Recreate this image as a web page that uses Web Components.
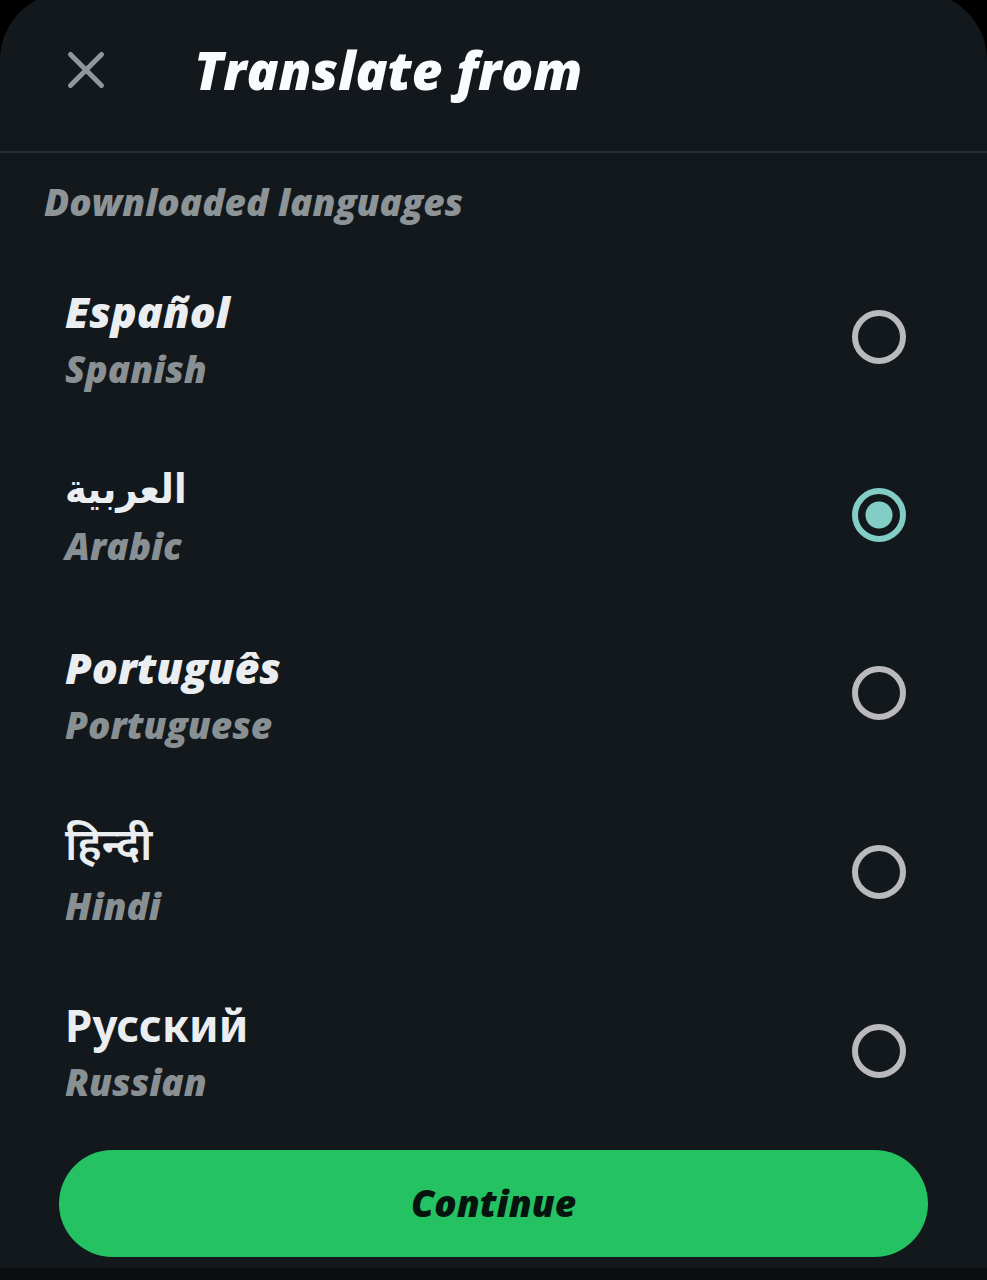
<!DOCTYPE html>
<html lang="en">
<head>
<meta charset="utf-8">
<meta name="viewport" content="width=device-width, initial-scale=1">
<title>Translate from</title>
<style>
  html, body { margin: 0; background: #000; }
  body { min-height: 100vh; overflow-x: hidden; font-family: "Open Sans", "Noto Sans", "Liberation Sans", sans-serif; }
</style>
</head>
<body>
<translate-sheet>
  <sheet-header slot="header">Translate from</sheet-header>
  <language-list label="Downloaded languages">
    <language-option code="es" name="Spanish">Español</language-option>
    <language-option code="ar" name="Arabic" script="arabic" checked>العربية</language-option>
    <language-option code="pt" name="Portuguese">Português</language-option>
    <language-option code="hi" name="Hindi" script="tall">हिन्दी</language-option>
    <language-option code="ru" name="Russian" script="plain">Русский</language-option>
  </language-list>
  <primary-button slot="footer">Continue</primary-button>
</translate-sheet>

<script>
class Base extends HTMLElement {
  connectedCallback() {
    if (!this.shadowRoot) this.attachShadow({ mode: "open" }).innerHTML = this.render();
  }
}

customElements.define("translate-sheet", class extends Base {
  render() {
    return `
    <style>
      :host { display: flex; flex-direction: column; min-height: 100vh; overflow: hidden; background: #000; }
      main { flex: 1; display: flex; flex-direction: column; margin-top: -8px; background: #13181c; border-radius: 68px 68px 0 0; }
      .content { flex: 1; }
      footer { padding: 10px 59px 11px; }
      .nav { height: 12px; background: #0a0e11; }
    </style>
    <main>
      <slot name="header"></slot>
      <div class="content"><slot></slot></div>
      <footer><slot name="footer"></slot></footer>
      <div class="nav"></div>
    </main>`;
  }
});

customElements.define("sheet-header", class extends Base {
  render() {
    return `
    <style>
      :host { display: block; border-bottom: 2px solid #292d30; }
      header { display: flex; align-items: center; gap: 70px; height: 139px; padding: 8px 48px 12px; }
      button { width: 76px; height: 76px; padding: 0; border: 0; background: none; color: #8f979b; display: grid; place-items: center; }
      h1 { margin: 0; font-size: 53px; line-height: 64px; font-weight: 800; font-style: italic; color: #f9fbfe; white-space: nowrap; }
    </style>
    <header>
      <button type="button" aria-label="Close">
        <svg width="40" height="40" viewBox="0 0 40 40" fill="none" stroke="currentColor" stroke-width="5" stroke-linecap="round"><path d="M4.500 4.500L35.500 35.500M35.500 4.500L4.500 35.500"/></svg>
      </button>
      <h1><slot></slot></h1>
    </header>`;
  }
});

customElements.define("language-list", class extends Base {
  render() {
    return `
    <style>
      :host { display: block; }
      section { padding-top: 25px; }
      h2 { margin: 0 0 22px; padding: 0 44px; font-size: 37px; line-height: 48px; font-weight: 800; font-style: italic; color: #8d9497; }
    </style>
    <section role="radiogroup" aria-labelledby="title">
      <h2 id="title">${this.getAttribute("label")}</h2>
      <slot></slot>
    </section>`;
  }
  connectedCallback() {
    super.connectedCallback();
    this.addEventListener("language-change", (event) => {
      for (const option of this.children) option.checked = option === event.target;
    });
  }
});

customElements.define("language-option", class extends Base {
  set checked(value) { this.shadowRoot.querySelector("input").checked = value; }
  render() {
    return `
    <style>
      :host { display: block; }
      label { display: flex; align-items: center; justify-content: space-between; height: 178px; padding: 0 81px 0 65px; }
      .text { display: flex; flex-direction: column; align-items: flex-start; padding-top: 6px; }
      .native { font-size: 43px; line-height: 58px; font-weight: 800; font-style: italic; color: #ebeef1; }
      .name { font-size: 37px; line-height: 56px; font-weight: 800; font-style: italic; color: #899094; }
      :host([script]) .text { padding-top: 4px; }
      :host([script]) .native { font-family: "Noto Sans", "DejaVu Sans", sans-serif; font-size: 44px; font-weight: 700; font-style: normal; }
      :host([script="arabic"]) .native { font-family: "DejaVu Sans Condensed", "DejaVu Sans", sans-serif; font-size: 41px; }
      :host([script="tall"]) label { height: 180px; }
      :host([script="tall"]) .native { font-weight: 600; }
      :host([script="tall"]) .text { gap: 6px; }
      input { appearance: none; flex: none; box-sizing: border-box; width: 54px; height: 54px; margin: 0; border: 6px solid #bababc; border-radius: 50%; }
      input:checked { border-color: #82cec6; background: radial-gradient(circle, #82cec6 13px, transparent 14px); }
    </style>
    <label>
      <span class="text">
        <span class="native" lang="${this.getAttribute("code")}"><slot></slot></span>
        <span class="name">${this.getAttribute("name")}</span>
      </span>
      <input type="radio" name="language" value="${this.getAttribute("code")}" ${this.hasAttribute("checked") ? "checked" : ""}>
    </label>`;
  }
  connectedCallback() {
    super.connectedCallback();
    this.shadowRoot.querySelector("input").addEventListener("change", () =>
      this.dispatchEvent(new CustomEvent("language-change", { bubbles: true })));
  }
});

customElements.define("primary-button", class extends Base {
  render() {
    return `
    <style>
      :host { display: block; }
      button { display: block; width: 100%; height: 107px; padding: 0 0 2px; border: 0; border-radius: 54px; background: #25c264; color: #07140e; font: italic 800 37px/48px "Open Sans", "Noto Sans", sans-serif; }
    </style>
    <button type="button"><slot></slot></button>`;
  }
});
</script>
</body>
</html>
